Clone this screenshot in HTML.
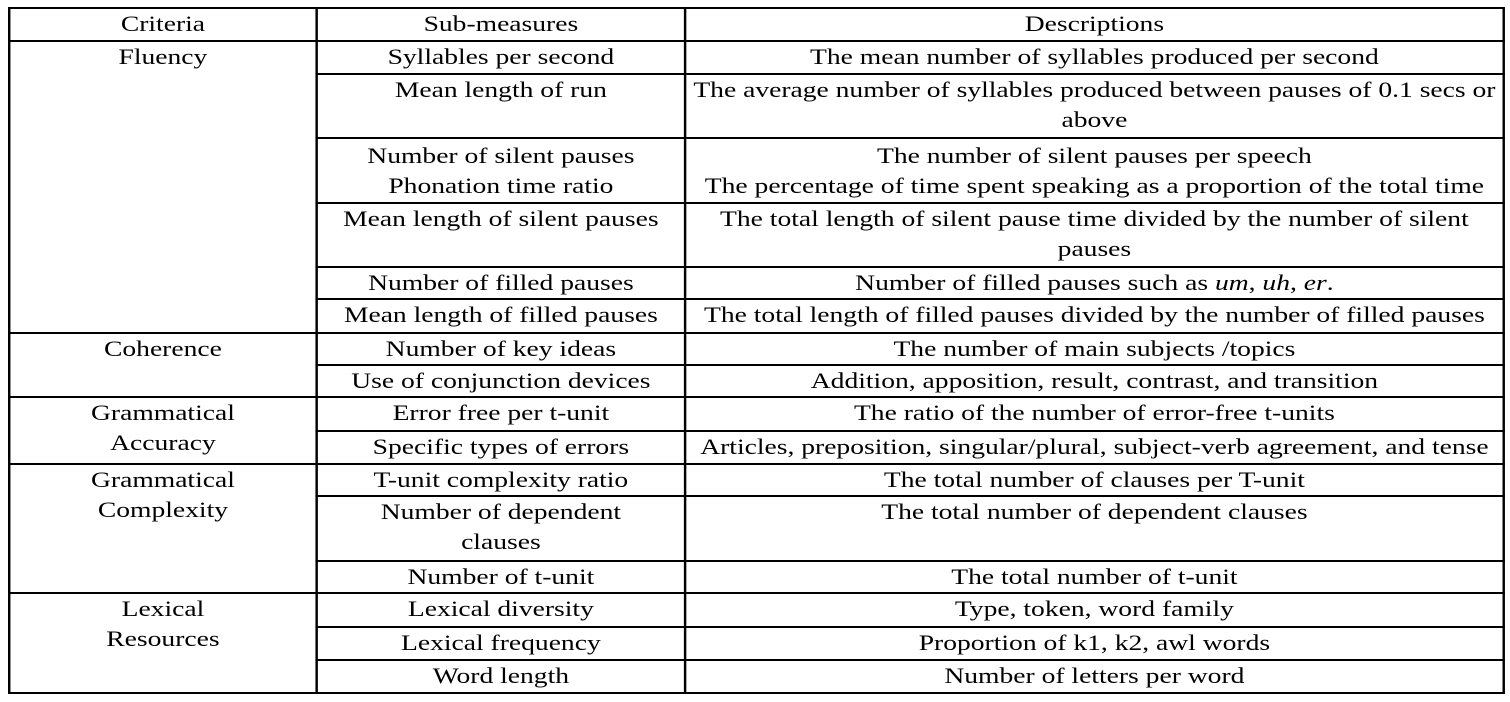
<!DOCTYPE html>
<html><head><meta charset="utf-8"><style>
html,body{margin:0;padding:0;background:#fff;width:1510px;height:702px;overflow:hidden}
table{position:absolute;left:8px;top:7px;border-collapse:collapse;table-layout:fixed;width:1225px;font-family:"Liberation Serif","Times New Roman",serif;font-size:22.6px;color:#000;transform:scaleX(1.22);transform-origin:0 0}
td{border:2px solid #000;padding:0;vertical-align:top;text-align:center;line-height:30px;overflow:hidden;white-space:nowrap}
</style></head><body>
<table>
<colgroup><col style="width:252px"><col style="width:302px"><col style="width:671px"></colgroup>
<tr style="height:33px"><td>Criteria</td><td>Sub-measures</td><td>Descriptions</td></tr>
<tr style="height:33px"><td rowspan="6">Fluency</td><td>Syllables per second</td><td>The mean number of syllables produced per second</td></tr>
<tr style="height:64px"><td>Mean length of run</td><td>The average number of syllables produced between pauses of 0.1 secs or<br>above</td></tr>
<tr style="height:65px"><td style="padding-top:2px">Number of silent pauses<br>Phonation time ratio</td><td style="padding-top:2px">The number of silent pauses per speech<br>The percentage of time spent speaking as a proportion of the total time</td></tr>
<tr style="height:64px"><td>Mean length of silent pauses</td><td>The total length of silent pause time divided by the number of silent<br>pauses</td></tr>
<tr style="height:32px"><td>Number of filled pauses</td><td>Number of filled pauses such as <i>um</i>, <i>uh</i>, <i>er</i>.</td></tr>
<tr style="height:34px"><td>Mean length of filled pauses</td><td>The total length of filled pauses divided by the number of filled pauses</td></tr>
<tr style="height:32px"><td rowspan="2">Coherence</td><td>Number of key ideas</td><td>The number of main subjects /topics</td></tr>
<tr style="height:32px"><td>Use of conjunction devices</td><td>Addition, apposition, result, contrast, and transition</td></tr>
<tr style="height:34px"><td rowspan="2">Grammatical<br>Accuracy</td><td>Error free per t-unit</td><td>The ratio of the number of error-free t-units</td></tr>
<tr style="height:33px"><td>Specific types of errors</td><td>Articles, preposition, singular/plural, subject-verb agreement, and tense</td></tr>
<tr style="height:32px"><td rowspan="3">Grammatical<br>Complexity</td><td>T-unit complexity ratio</td><td>The total number of clauses per T-unit</td></tr>
<tr style="height:65px"><td>Number of dependent<br>clauses</td><td>The total number of dependent clauses</td></tr>
<tr style="height:32px"><td>Number of t-unit</td><td>The total number of t-unit</td></tr>
<tr style="height:34px"><td rowspan="3">Lexical<br>Resources</td><td>Lexical diversity</td><td>Type, token, word family</td></tr>
<tr style="height:33px"><td>Lexical frequency</td><td>Proportion of k1, k2, awl words</td></tr>
<tr style="height:33px"><td>Word length</td><td>Number of letters per word</td></tr>
</table>
</body></html>
